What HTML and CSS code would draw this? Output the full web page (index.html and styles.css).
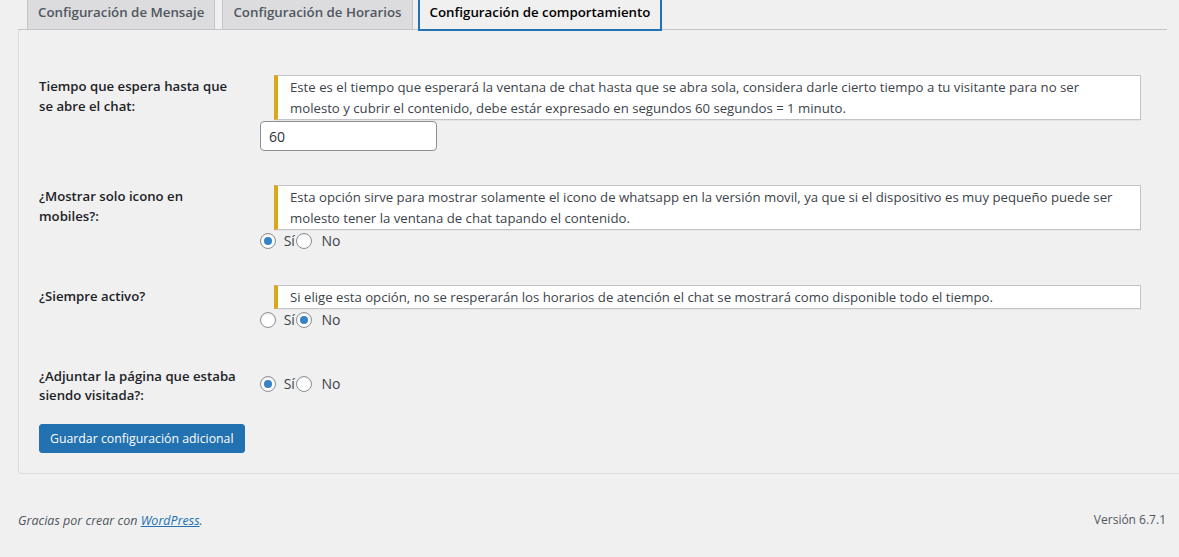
FILE: index.html
```html
<!DOCTYPE html>
<html lang="es">
<head>
    <meta charset="UTF-8">
    <meta name="viewport" content="width=device-width, initial-scale=1.0">
    <title>Configuración de comportamiento</title>
    <link rel="stylesheet" href="styles.css">
</head>
<body>
    <div class="wrap">
        <nav class="nav-tab-wrapper">
            <a href="#" class="nav-tab">Configuración de Mensaje</a>
            <a href="#" class="nav-tab">Configuración de Horarios</a>
            <a href="#" class="nav-tab nav-tab-active">Configuración de comportamiento</a>
        </nav>

        <div class="tab-panel">
            <form class="form-table">
                <div class="form-row">
                    <div class="form-label">Tiempo que espera hasta que se abre el chat:</div>
                    <div class="form-field">
                        <div class="notice">Este es el tiempo que esperará la ventana de chat hasta que se abra sola, considera darle cierto tiempo a tu visitante para no ser molesto y cubrir el contenido, debe estár expresado en segundos 60 segundos = 1 minuto.</div>
                        <input type="text" class="small-text" value="60">
                    </div>
                </div>

                <div class="form-row">
                    <div class="form-label">¿Mostrar solo icono en mobiles?:</div>
                    <div class="form-field">
                        <div class="notice">Esta opción sirve para mostrar solamente el icono de whatsapp en la versión movil, ya que si el dispositivo es muy pequeño puede ser molesto tener la ventana de chat tapando el contenido.</div>
                        <div class="radio-group">
                            <label><input type="radio" name="solo_icono" checked> Sí</label><label><input type="radio" name="solo_icono"> No</label>
                        </div>
                    </div>
                </div>

                <div class="form-row">
                    <div class="form-label">¿Siempre activo?</div>
                    <div class="form-field">
                        <div class="notice">Si elige esta opción, no se resperarán los horarios de atención el chat se mostrará como disponible todo el tiempo.</div>
                        <div class="radio-group">
                            <label><input type="radio" name="siempre_activo"> Sí</label><label><input type="radio" name="siempre_activo" checked> No</label>
                        </div>
                    </div>
                </div>

                <div class="form-row last-row">
                    <div class="form-label">¿Adjuntar la página que estaba siendo visitada?:</div>
                    <div class="form-field">
                        <div class="radio-group">
                            <label><input type="radio" name="adjuntar" checked> Sí</label><label><input type="radio" name="adjuntar"> No</label>
                        </div>
                    </div>
                </div>

                <div class="submit">
                    <button type="button" class="button-primary">Guardar configuración adicional</button>
                </div>
            </form>
        </div>
    </div>

    <div class="footer">
        <p class="footer-left">Gracias por crear con <a href="#">WordPress</a>.</p>
        <p class="footer-right">Versión 6.7.1</p>
    </div>
</body>
</html>
```

FILE: styles.css
```css
body {
    margin: 0;
    background: #f0f0f1;
    color: #3c434a;
    font-family: "Open Sans", "Noto Sans", sans-serif;
    font-size: 13px;
    line-height: 1.4;
    overflow: hidden;
}

.wrap {
    margin: -7px 12px 0 18px;
}

/* pestañas */
.nav-tab-wrapper {
    display: flex;
    align-items: flex-end;
    gap: 7px;
    padding-left: 9px;
    border-bottom: 1px solid #c3c4c7;
}

.nav-tab {
    display: block;
    padding: 5px 10px;
    margin-bottom: -1px;
    border: 1px solid #c3c4c7;
    background: #dcdcde;
    color: #50575e;
    font-size: 13.3px;
    font-weight: 600;
    line-height: 24px;
    text-decoration: none;
    white-space: nowrap;
}

.nav-tab-active {
    margin-left: -2px;
    margin-bottom: -2px;
    border: 2px solid #2271b1;
    background: #f0f0f1;
    color: #000;
}

/* panel */
.tab-panel {
    margin-right: -30px;
    padding: 45px 20px 20px;
    border: 1px solid #dcdcde;
    border-top: none;
    border-radius: 0 0 4px 4px;
}

.form-row {
    display: grid;
    grid-template-columns: 221px 1fr;
    padding-bottom: 34px;
}

.form-label {
    width: 200px;
    padding-top: 1px;
    color: #1d2327;
    font-size: 13.2px;
    font-weight: 600;
    line-height: 20px;
}

.form-field {
    padding-right: 35px;
}

.last-row {
    padding-bottom: 19px;
}

.last-row .form-label {
    padding-top: 3px;
    line-height: 19px;
}

.last-row .form-field {
    padding-top: 9px;
}

.notice {
    margin-left: 14px;
    padding: 1px 12px 0;
    background: #fff;
    border: 1px solid #c3c4c7;
    border-left: 4px solid #dba617;
    box-shadow: 0 1px 1px rgba(0, 0, 0, 0.04);
    font-size: 13.2px;
    line-height: 21px;
}

.small-text {
    display: block;
    box-sizing: border-box;
    width: 177px;
    height: 30px;
    margin-top: 1px;
    padding: 0 8px;
    border: 1px solid #8c8f94;
    border-radius: 4px;
    background: #fff;
    color: #2c3338;
    font: inherit;
    font-size: 14px;
}

.radio-group {
    display: flex;
    align-items: center;
    height: 21px;
    font-size: 14px;
}

.radio-group label {
    display: flex;
    align-items: center;
    white-space: pre;
}

.radio-group label + label {
    margin-left: 1px;
}

.radio-group input {
    appearance: none;
    position: relative;
    width: 16px;
    height: 16px;
    margin: 0 4px 0 0;
    border: 1px solid #8c8f94;
    border-radius: 50%;
    background: #fff;
    box-shadow: inset 0 1px 2px rgba(0, 0, 0, 0.1);
}

.radio-group label + label input {
    margin-right: 6px;
}

.radio-group input:checked::before {
    content: "";
    position: absolute;
    top: 3px;
    left: 3px;
    width: 8px;
    height: 8px;
    border-radius: 50%;
    background: #3582c4;
}

.button-primary {
    display: block;
    height: 29px;
    padding: 0 10px;
    border: 1px solid #2271b1;
    border-radius: 3px;
    background: #2271b1;
    color: #fff;
    font: inherit;
    font-size: 12.3px;
    cursor: pointer;
}

/* pie de página */
.footer {
    display: flex;
    justify-content: space-between;
    margin: 0 13px 0 18px;
    padding-top: 38px;
    color: #50575e;
}

.footer p {
    margin: 0;
}

.footer-left {
    font-size: 12.5px;
    font-style: italic;
}

.footer-left a {
    color: #2271b1;
}

.footer-right {
    font-size: 12px;
}
```
